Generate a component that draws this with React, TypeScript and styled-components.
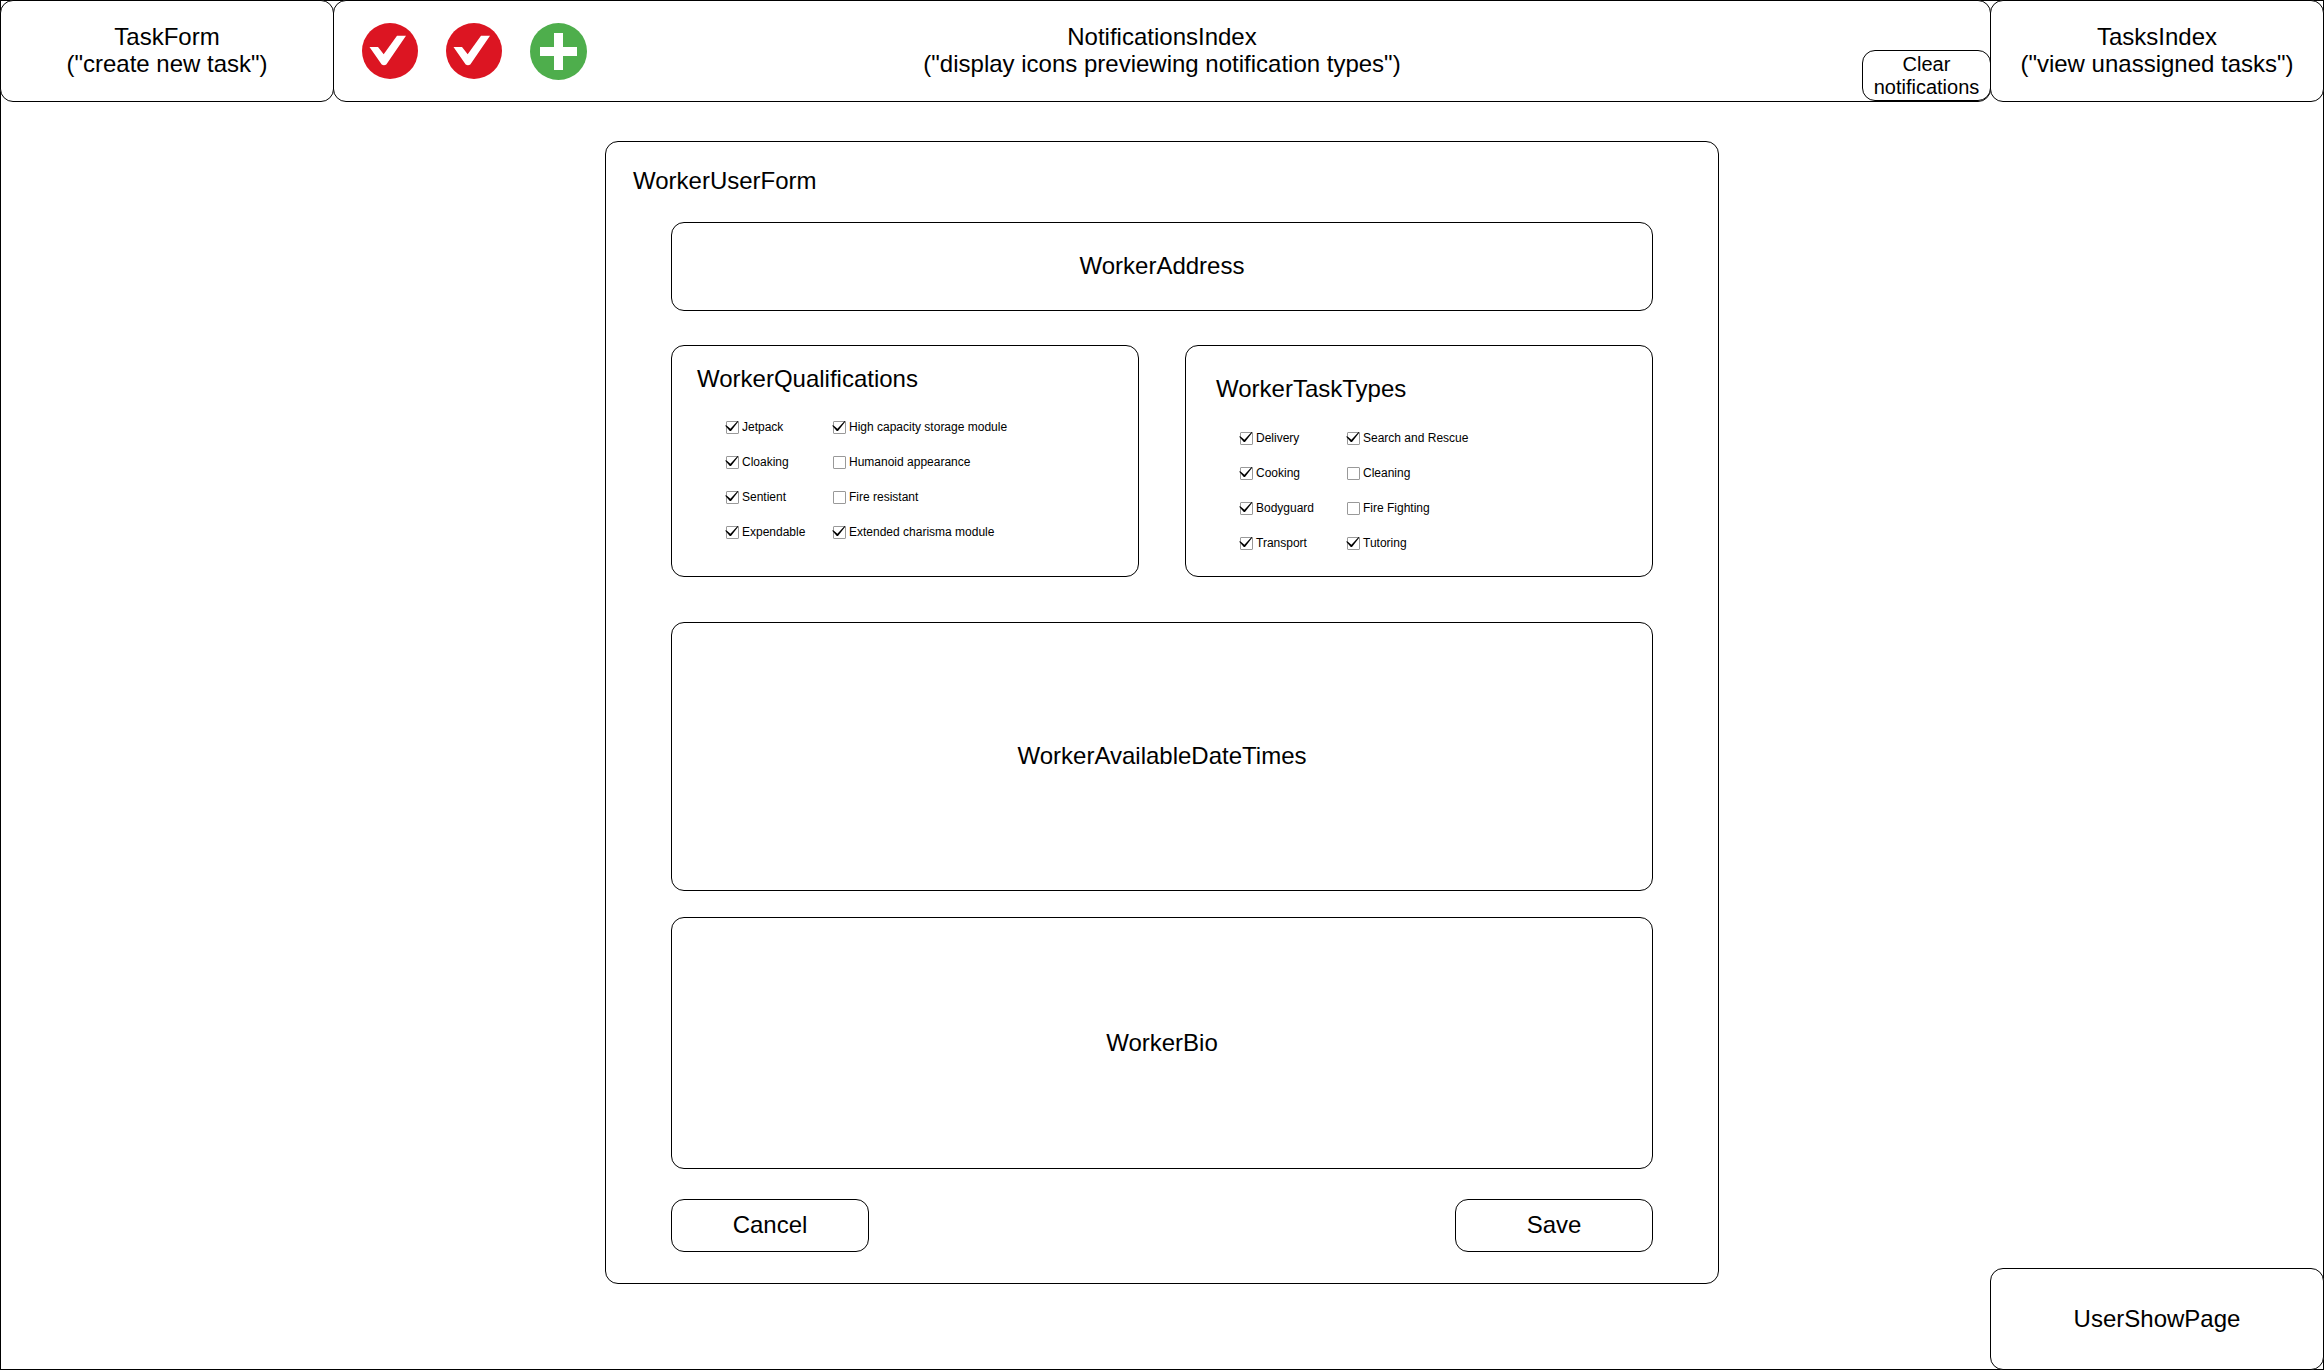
import React from "react";
import styled, { createGlobalStyle } from "styled-components";

const line = "1px solid #000";
const sideWidth = "334px";

const GlobalStyle = createGlobalStyle`
  *, *::before, *::after { box-sizing: border-box; }
  body {
    margin: 0;
    background: #fff;
    color: #000;
    font-family: "Liberation Sans", Arial, Helvetica, sans-serif;
    font-size: 24px;
    line-height: 27px;
  }
  h1, h2, p { margin: 0; font: inherit; }
  button { font: inherit; color: inherit; cursor: pointer; }
`;

const Page = styled.div`
  display: flex;
  flex-direction: column;
  min-height: 100vh;
  border: ${line};
`;

const Box = styled.div`
  border: ${line};
  border-radius: 13px;
  background: #fff;
`;

const BoxButton = styled(Box).attrs({ as: "button" })`
  padding: 0 0 2px;
  text-align: center;
`;

const Header = styled.header`
  display: grid;
  grid-template-columns: ${sideWidth} minmax(0, 1fr) ${sideWidth};
  min-height: 102px;
  margin: -1px -1px 0;
`;

const Notifications = styled(Box).attrs({ as: "section" })`
  display: grid;
  grid-template-columns: 1fr auto 1fr;
  align-items: center;
  margin: 0 -1px;
  text-align: center;
`;

const NotificationsText = styled.p`
  && { padding-bottom: 2px; }
`;

const IconList = styled.div`
  display: flex;
  align-items: center;
  gap: 28px;
  padding-left: 28px;

  svg { display: block; flex: none; }
`;

const ClearButton = styled(BoxButton)`
  align-self: end;
  justify-self: end;
  width: 129px;
  height: 51px;
  margin-right: -1px;
  padding: 0;
  font-size: 20px;
  line-height: 23px;
`;

const Main = styled.main`
  flex: 1;
  display: grid;
  grid-template-columns: ${sideWidth} minmax(0, 1fr) ${sideWidth};
  margin: 0 -1px -1px;
`;

const Form = styled(Box).attrs({ as: "form" })`
  grid-column: 2;
  justify-self: center;
  align-self: start;
  width: 100%;
  max-width: 1114px;
  margin: 39px 0;
  padding: 25px 27px 31px;
`;

const Fields = styled.div`
  display: flex;
  flex-direction: column;
  padding: 28px 38px 0;
`;

const Section = styled(Box).attrs({ as: "section" })<{ $height: number; $gap: number }>`
  display: flex;
  align-items: center;
  justify-content: center;
  min-height: ${(p) => p.$height}px;
  margin-bottom: ${(p) => p.$gap}px;
  padding-bottom: 2px;
`;

const Cards = styled.div`
  display: grid;
  grid-template-columns: 1fr 1fr;
  gap: 46px;
  margin-bottom: 45px;
`;

const Card = styled(Box).attrs({ as: "section" })<{ $roomy?: boolean }>`
  min-height: 232px;
  padding: ${(p) => (p.$roomy ? "29px 30px 0" : "19px 25px 0")};
`;

const Options = styled.div<{ $top: number; $indent: number }>`
  display: grid;
  grid-template-columns: 107px auto;
  justify-content: start;
  row-gap: 20px;
  margin: ${(p) => p.$top}px 0 0 ${(p) => p.$indent}px;
`;

const OptionLabel = styled.label`
  display: flex;
  align-items: flex-start;
  gap: 3px;
  font-size: 12px;
  line-height: 15px;
  white-space: nowrap;
`;

const CheckWrap = styled.span`
  position: relative;
  flex: none;
  width: 13px;
  height: 13px;
  margin-top: 1px;
`;

const CheckInput = styled.input`
  appearance: none;
  display: block;
  width: 13px;
  height: 13px;
  margin: 0;
  border: 1px solid #999;
  border-radius: 1px;
  background: #fff;

  &:not(:checked) + svg { display: none; }
`;

const Tick = styled.svg`
  position: absolute;
  left: -1px;
  top: 0;
  pointer-events: none;
`;

const Actions = styled.div`
  display: flex;
  justify-content: space-between;
`;

const ActionButton = styled(BoxButton)`
  width: 198px;
  height: 53px;
`;

const ShowPageButton = styled(BoxButton)`
  grid-column: 3;
  align-self: end;
  height: 102px;
`;

type OptionItem = { label: string; checked: boolean };

const qualifications: OptionItem[] = [
  { label: "Jetpack", checked: true },
  { label: "High capacity storage module", checked: true },
  { label: "Cloaking", checked: true },
  { label: "Humanoid appearance", checked: false },
  { label: "Sentient", checked: true },
  { label: "Fire resistant", checked: false },
  { label: "Expendable", checked: true },
  { label: "Extended charisma module", checked: true },
];

const taskTypes: OptionItem[] = [
  { label: "Delivery", checked: true },
  { label: "Search and Rescue", checked: true },
  { label: "Cooking", checked: true },
  { label: "Cleaning", checked: false },
  { label: "Bodyguard", checked: true },
  { label: "Fire Fighting", checked: false },
  { label: "Transport", checked: true },
  { label: "Tutoring", checked: true },
];

const CheckIcon = () => (
  <svg width="56" height="56" viewBox="0 0 56 56" aria-hidden="true">
    <circle cx="28" cy="28" r="28" fill="#dc1522" />
    <path d="M7.5 24H16L21.7 31.3L35 12.7H44L24.3 41.6Q22 43 19.7 41.6Z" fill="#fff" />
  </svg>
);

const PlusIcon = () => (
  <svg width="57" height="57" viewBox="0 0 57 57" aria-hidden="true">
    <circle cx="28.5" cy="28.5" r="28.5" fill="#4eae4c" />
    <path d="M24 10H33V24H47V33H33V47H24V33H10V24H24Z" fill="#fff" />
  </svg>
);

const Option = ({ label, checked }: OptionItem) => (
  <OptionLabel>
    <CheckWrap>
      <CheckInput type="checkbox" defaultChecked={checked} />
      <Tick width="14" height="13" viewBox="0 0 14 13" aria-hidden="true">
        <path d="M0 4.6L1.6 4.4L5.4 7.7L12.6 0L13.4 0.5L6 10L4.8 10Z" fill="#000" />
      </Tick>
    </CheckWrap>
    {label}
  </OptionLabel>
);

export default function App() {
  return (
    <>
      <GlobalStyle />
      <Page>
        <Header>
          <BoxButton type="button">
            TaskForm
            <br />
            ("create new task")
          </BoxButton>
          <Notifications>
            <IconList>
              <CheckIcon />
              <CheckIcon />
              <PlusIcon />
            </IconList>
            <NotificationsText>
              NotificationsIndex
              <br />
              ("display icons previewing notification types")
            </NotificationsText>
            <ClearButton type="button">
              Clear
              <br />
              notifications
            </ClearButton>
          </Notifications>
          <BoxButton type="button">
            TasksIndex
            <br />
            ("view unassigned tasks")
          </BoxButton>
        </Header>
        <Main>
          <Form onSubmit={(e: React.FormEvent) => e.preventDefault()}>
            <h1>WorkerUserForm</h1>
            <Fields>
              <Section $height={89} $gap={34}>
                <h2>WorkerAddress</h2>
              </Section>
              <Cards>
                <Card>
                  <h2>WorkerQualifications</h2>
                  <Options $top={28} $indent={29}>
                    {qualifications.map((item) => (
                      <Option key={item.label} {...item} />
                    ))}
                  </Options>
                </Card>
                <Card $roomy>
                  <h2>WorkerTaskTypes</h2>
                  <Options $top={29} $indent={24}>
                    {taskTypes.map((item) => (
                      <Option key={item.label} {...item} />
                    ))}
                  </Options>
                </Card>
              </Cards>
              <Section $height={269} $gap={26}>
                <h2>WorkerAvailableDateTimes</h2>
              </Section>
              <Section $height={252} $gap={30}>
                <h2>WorkerBio</h2>
              </Section>
              <Actions>
                <ActionButton type="button">Cancel</ActionButton>
                <ActionButton type="submit">Save</ActionButton>
              </Actions>
            </Fields>
          </Form>
          <ShowPageButton type="button">UserShowPage</ShowPageButton>
        </Main>
      </Page>
    </>
  );
}
